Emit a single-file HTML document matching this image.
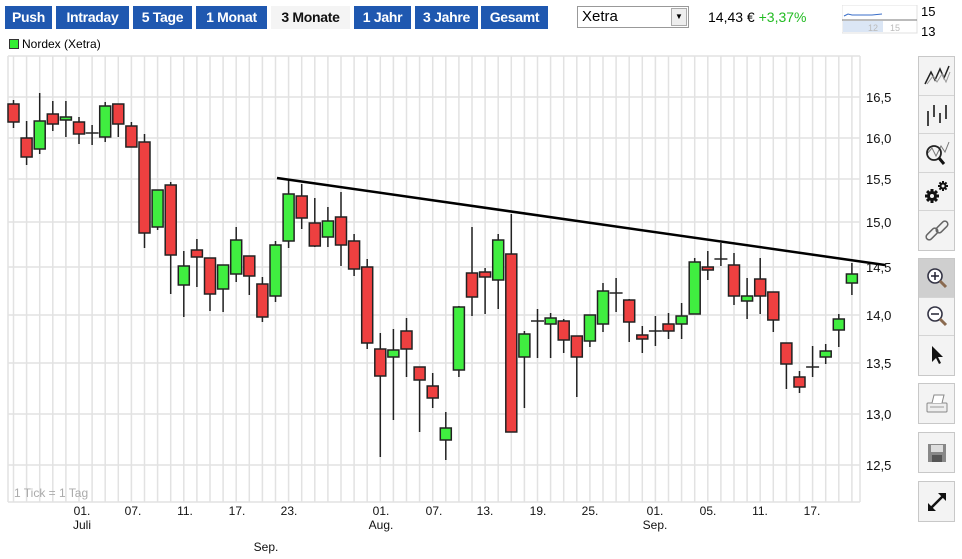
<!DOCTYPE html><html><head><meta charset="utf-8"><style>
body{margin:0;width:962px;height:559px;background:#fff;font-family:"Liberation Sans",sans-serif;position:relative;overflow:hidden}
.b{position:absolute;top:6px;height:23px;line-height:23px;background:#1f58b0;color:#fff;font-weight:bold;font-size:14px;text-align:center;font-family:"Liberation Sans Narrow","Liberation Sans",sans-serif;letter-spacing:-0.3px}
.sel{background:#f4f4f4;color:#111}
.tb{position:absolute;left:918px;width:37px;background:#f3f3f3;border:1px solid #c8c8c8;box-sizing:border-box}
.tb div{height:38.6px;border-bottom:1px solid #d4d4d4;box-sizing:border-box;display:flex;align-items:center;justify-content:center}
.tb div:last-child{border-bottom:none}
</style></head><body>
<div class="b" style="left:5px;width:47px">Push</div>
<div class="b" style="left:56px;width:73px">Intraday</div>
<div class="b" style="left:133px;width:59px">5 Tage</div>
<div class="b" style="left:196px;width:71px">1 Monat</div>
<div class="b sel" style="left:271px;width:79px">3 Monate</div>
<div class="b" style="left:354px;width:57px">1 Jahr</div>
<div class="b" style="left:415px;width:63px">3 Jahre</div>
<div class="b" style="left:481px;width:67px">Gesamt</div>
<div style="position:absolute;left:577px;top:6px;width:112px;height:22px;border:1px solid #999;box-sizing:border-box;font-size:15px;line-height:20px;padding-left:4px">Xetra<div style="position:absolute;right:1px;top:1px;width:16px;height:18px;background:#eee;border:1px solid #aaa;box-sizing:border-box;font-size:8px;text-align:center;line-height:16px">▼</div></div>
<div style="position:absolute;left:708px;top:9px;font-size:14px">14,43 € <span style="color:#22bb22">+3,37%</span></div>
<svg style="position:absolute;left:842px;top:5px" width="120" height="34">
<rect x="0" y="0" width="75" height="28" fill="#fff" stroke="#e0e0e0"/><rect x="1" y="16" width="40" height="11" fill="#dbe6f5"/>
<line x1="0" y1="15" x2="75" y2="15" stroke="#777"/><polyline points="2,11 6,9 10,10 20,10 30,10 40,9" fill="none" stroke="#3a6ec8"/>
<text x="26" y="26" font-size="9" fill="#bbb">12</text><text x="48" y="26" font-size="9" fill="#bbb">15</text>
<text x="79" y="11" font-size="13">15</text><text x="79" y="31" font-size="13">13</text></svg>
<div style="position:absolute;left:9px;top:39px;width:8px;height:8px;background:#3e3;border:1px solid #333"></div>
<div style="position:absolute;left:22px;top:37px;font-size:12px">Nordex (Xetra)</div>
<svg style="position:absolute;left:0;top:0" width="915" height="559">
<g stroke="#e2e2e2" stroke-width="1.5" id="v">
<line x1="8" y1="56" x2="8" y2="502"/><line x1="860" y1="56" x2="860" y2="502"/><line x1="8" y1="56" x2="860" y2="56"/><line x1="8" y1="502" x2="860" y2="502"/>
<line x1="13.5" y1="56" x2="13.5" y2="502"/><line x1="26.6" y1="56" x2="26.6" y2="502"/><line x1="39.7" y1="56" x2="39.7" y2="502"/><line x1="52.8" y1="56" x2="52.8" y2="502"/><line x1="65.9" y1="56" x2="65.9" y2="502"/><line x1="79" y1="56" x2="79" y2="502"/><line x1="92.1" y1="56" x2="92.1" y2="502"/><line x1="105.2" y1="56" x2="105.2" y2="502"/><line x1="118.3" y1="56" x2="118.3" y2="502"/><line x1="131.4" y1="56" x2="131.4" y2="502"/><line x1="144.5" y1="56" x2="144.5" y2="502"/><line x1="157.6" y1="56" x2="157.6" y2="502"/><line x1="170.7" y1="56" x2="170.7" y2="502"/><line x1="183.8" y1="56" x2="183.8" y2="502"/><line x1="196.9" y1="56" x2="196.9" y2="502"/><line x1="210" y1="56" x2="210" y2="502"/><line x1="223.1" y1="56" x2="223.1" y2="502"/><line x1="236.2" y1="56" x2="236.2" y2="502"/><line x1="249.3" y1="56" x2="249.3" y2="502"/><line x1="262.4" y1="56" x2="262.4" y2="502"/><line x1="275.5" y1="56" x2="275.5" y2="502"/><line x1="288.6" y1="56" x2="288.6" y2="502"/><line x1="301.7" y1="56" x2="301.7" y2="502"/><line x1="314.8" y1="56" x2="314.8" y2="502"/><line x1="327.9" y1="56" x2="327.9" y2="502"/><line x1="341" y1="56" x2="341" y2="502"/><line x1="354.1" y1="56" x2="354.1" y2="502"/><line x1="367.2" y1="56" x2="367.2" y2="502"/><line x1="380.3" y1="56" x2="380.3" y2="502"/><line x1="393.4" y1="56" x2="393.4" y2="502"/><line x1="406.5" y1="56" x2="406.5" y2="502"/><line x1="419.6" y1="56" x2="419.6" y2="502"/><line x1="432.7" y1="56" x2="432.7" y2="502"/><line x1="445.8" y1="56" x2="445.8" y2="502"/><line x1="458.9" y1="56" x2="458.9" y2="502"/><line x1="472" y1="56" x2="472" y2="502"/><line x1="485.1" y1="56" x2="485.1" y2="502"/><line x1="498.2" y1="56" x2="498.2" y2="502"/><line x1="511.3" y1="56" x2="511.3" y2="502"/><line x1="524.4" y1="56" x2="524.4" y2="502"/><line x1="537.5" y1="56" x2="537.5" y2="502"/><line x1="550.6" y1="56" x2="550.6" y2="502"/><line x1="563.7" y1="56" x2="563.7" y2="502"/><line x1="576.8" y1="56" x2="576.8" y2="502"/><line x1="589.9" y1="56" x2="589.9" y2="502"/><line x1="603" y1="56" x2="603" y2="502"/><line x1="616.1" y1="56" x2="616.1" y2="502"/><line x1="629.2" y1="56" x2="629.2" y2="502"/><line x1="642.3" y1="56" x2="642.3" y2="502"/><line x1="655.4" y1="56" x2="655.4" y2="502"/><line x1="668.5" y1="56" x2="668.5" y2="502"/><line x1="681.6" y1="56" x2="681.6" y2="502"/><line x1="694.7" y1="56" x2="694.7" y2="502"/><line x1="707.8" y1="56" x2="707.8" y2="502"/><line x1="720.9" y1="56" x2="720.9" y2="502"/><line x1="734" y1="56" x2="734" y2="502"/><line x1="747.1" y1="56" x2="747.1" y2="502"/><line x1="760.2" y1="56" x2="760.2" y2="502"/><line x1="773.3" y1="56" x2="773.3" y2="502"/><line x1="786.4" y1="56" x2="786.4" y2="502"/><line x1="799.5" y1="56" x2="799.5" y2="502"/><line x1="812.6" y1="56" x2="812.6" y2="502"/><line x1="825.7" y1="56" x2="825.7" y2="502"/><line x1="838.8" y1="56" x2="838.8" y2="502"/><line x1="851.9" y1="56" x2="851.9" y2="502"/>
<line x1="8" y1="97" x2="860" y2="97"/><line x1="8" y1="138" x2="860" y2="138"/><line x1="8" y1="179" x2="860" y2="179"/><line x1="8" y1="222" x2="860" y2="222"/><line x1="8" y1="267" x2="860" y2="267"/><line x1="8" y1="315" x2="860" y2="315"/><line x1="8" y1="363" x2="860" y2="363"/><line x1="8" y1="414" x2="860" y2="414"/><line x1="8" y1="465" x2="860" y2="465"/>
</g>
<g font-size="13" fill="#111"><text x="866" y="102">16,5</text><text x="866" y="143">16,0</text><text x="866" y="184">15,5</text><text x="866" y="227">15,0</text><text x="866" y="272">14,5</text><text x="866" y="320">14,0</text><text x="866" y="368">13,5</text><text x="866" y="419">13,0</text><text x="866" y="470">12,5</text></g>
<text x="14" y="497" font-size="12" fill="#aaa">1 Tick = 1 Tag</text>
<g font-size="12" fill="#111" text-anchor="middle"><text x="82" y="515">01.</text><text x="82" y="529">Juli</text><text x="133" y="515">07.</text><text x="185" y="515">11.</text><text x="237" y="515">17.</text><text x="289" y="515">23.</text><text x="381" y="515">01.</text><text x="381" y="529">Aug.</text><text x="434" y="515">07.</text><text x="485" y="515">13.</text><text x="538" y="515">19.</text><text x="590" y="515">25.</text><text x="655" y="515">01.</text><text x="655" y="529">Sep.</text><text x="708" y="515">05.</text><text x="760" y="515">11.</text><text x="812" y="515">17.</text><text x="266" y="551">Sep.</text></g>
<g stroke="#222" stroke-width="1.5">
<line x1="13.5" y1="100" x2="13.5" y2="128"/><rect x="8" y="104" width="11" height="18" fill="#ee4040"/>
<line x1="26.6" y1="121" x2="26.6" y2="165"/><rect x="21.1" y="138" width="11" height="19" fill="#ee4040"/>
<line x1="39.7" y1="93" x2="39.7" y2="154"/><rect x="34.2" y="121" width="11" height="28" fill="#40ee40"/>
<line x1="52.8" y1="101" x2="52.8" y2="131"/><rect x="47.3" y="114" width="11" height="10" fill="#ee4040"/>
<line x1="65.9" y1="101" x2="65.9" y2="137"/><rect x="60.4" y="117" width="11" height="3" fill="#40ee40"/>
<line x1="79" y1="117" x2="79" y2="144"/><rect x="73.5" y="122" width="11" height="12" fill="#ee4040"/>
<line x1="92.1" y1="125" x2="92.1" y2="145"/><line x1="85.6" y1="133" x2="98.6" y2="133"/>
<line x1="105.2" y1="102" x2="105.2" y2="142"/><rect x="99.7" y="106" width="11" height="31" fill="#40ee40"/>
<line x1="118.3" y1="104" x2="118.3" y2="137"/><rect x="112.8" y="104" width="11" height="20" fill="#ee4040"/>
<line x1="131.4" y1="122" x2="131.4" y2="147"/><rect x="125.9" y="126" width="11" height="21" fill="#ee4040"/>
<line x1="144.5" y1="134" x2="144.5" y2="248"/><rect x="139" y="142" width="11" height="91" fill="#ee4040"/>
<line x1="157.6" y1="190" x2="157.6" y2="230"/><rect x="152.1" y="190" width="11" height="37" fill="#40ee40"/>
<line x1="170.7" y1="182" x2="170.7" y2="294"/><rect x="165.2" y="185" width="11" height="70" fill="#ee4040"/>
<line x1="183.8" y1="251" x2="183.8" y2="317"/><rect x="178.3" y="266" width="11" height="19" fill="#40ee40"/>
<line x1="196.9" y1="239" x2="196.9" y2="287"/><rect x="191.4" y="250" width="11" height="7" fill="#ee4040"/>
<line x1="210" y1="258" x2="210" y2="311"/><rect x="204.5" y="258" width="11" height="36" fill="#ee4040"/>
<line x1="223.1" y1="265" x2="223.1" y2="312"/><rect x="217.6" y="265" width="11" height="24" fill="#40ee40"/>
<line x1="236.2" y1="227" x2="236.2" y2="282"/><rect x="230.7" y="240" width="11" height="34" fill="#40ee40"/>
<line x1="249.3" y1="256" x2="249.3" y2="295"/><rect x="243.8" y="256" width="11" height="20" fill="#ee4040"/>
<line x1="262.4" y1="277" x2="262.4" y2="322"/><rect x="256.9" y="284" width="11" height="33" fill="#ee4040"/>
<line x1="275.5" y1="241" x2="275.5" y2="302"/><rect x="270" y="245" width="11" height="51" fill="#40ee40"/>
<line x1="288.6" y1="179" x2="288.6" y2="248"/><rect x="283.1" y="194" width="11" height="47" fill="#40ee40"/>
<line x1="301.7" y1="184" x2="301.7" y2="229"/><rect x="296.2" y="196" width="11" height="22" fill="#ee4040"/>
<line x1="314.8" y1="198" x2="314.8" y2="247"/><rect x="309.3" y="223" width="11" height="23" fill="#ee4040"/>
<line x1="327.9" y1="207" x2="327.9" y2="247"/><rect x="322.4" y="221" width="11" height="16" fill="#40ee40"/>
<line x1="341" y1="192" x2="341" y2="266"/><rect x="335.5" y="217" width="11" height="28" fill="#ee4040"/>
<line x1="354.1" y1="234" x2="354.1" y2="276"/><rect x="348.6" y="241" width="11" height="28" fill="#ee4040"/>
<line x1="367.2" y1="259" x2="367.2" y2="349"/><rect x="361.7" y="267" width="11" height="76" fill="#ee4040"/>
<line x1="380.3" y1="333" x2="380.3" y2="457"/><rect x="374.8" y="349" width="11" height="27" fill="#ee4040"/>
<line x1="393.4" y1="329" x2="393.4" y2="420"/><rect x="387.9" y="350" width="11" height="7" fill="#40ee40"/>
<line x1="406.5" y1="318" x2="406.5" y2="377"/><rect x="401" y="331" width="11" height="18" fill="#ee4040"/>
<line x1="419.6" y1="367" x2="419.6" y2="432"/><rect x="414.1" y="367" width="11" height="13" fill="#ee4040"/>
<line x1="432.7" y1="373" x2="432.7" y2="408"/><rect x="427.2" y="386" width="11" height="12" fill="#ee4040"/>
<line x1="445.8" y1="412" x2="445.8" y2="460"/><rect x="440.3" y="428" width="11" height="12" fill="#40ee40"/>
<line x1="458.9" y1="306" x2="458.9" y2="377"/><rect x="453.4" y="307" width="11" height="63" fill="#40ee40"/>
<line x1="472" y1="227" x2="472" y2="316"/><rect x="466.5" y="273" width="11" height="24" fill="#ee4040"/>
<line x1="485.1" y1="268" x2="485.1" y2="314"/><rect x="479.6" y="272" width="11" height="5" fill="#ee4040"/>
<line x1="498.2" y1="234" x2="498.2" y2="309"/><rect x="492.7" y="240" width="11" height="40" fill="#40ee40"/>
<line x1="511.3" y1="214" x2="511.3" y2="432"/><rect x="505.8" y="254" width="11" height="178" fill="#ee4040"/>
<line x1="524.4" y1="331" x2="524.4" y2="408"/><rect x="518.9" y="334" width="11" height="23" fill="#40ee40"/>
<line x1="537.5" y1="309" x2="537.5" y2="358"/><line x1="531" y1="321" x2="544" y2="321"/>
<line x1="550.6" y1="313" x2="550.6" y2="358"/><rect x="545.1" y="318" width="11" height="6" fill="#40ee40"/>
<line x1="563.7" y1="319" x2="563.7" y2="353"/><rect x="558.2" y="321" width="11" height="19" fill="#ee4040"/>
<line x1="576.8" y1="336" x2="576.8" y2="397"/><rect x="571.3" y="336" width="11" height="21" fill="#ee4040"/>
<line x1="589.9" y1="315" x2="589.9" y2="347"/><rect x="584.4" y="315" width="11" height="26" fill="#40ee40"/>
<line x1="603" y1="283" x2="603" y2="332"/><rect x="597.5" y="291" width="11" height="33" fill="#40ee40"/>
<line x1="616.1" y1="278" x2="616.1" y2="312"/><line x1="609.6" y1="293" x2="622.6" y2="293"/>
<line x1="629.2" y1="299" x2="629.2" y2="342"/><rect x="623.7" y="300" width="11" height="22" fill="#ee4040"/>
<line x1="642.3" y1="326" x2="642.3" y2="353"/><rect x="636.8" y="335" width="11" height="4" fill="#ee4040"/>
<line x1="655.4" y1="316" x2="655.4" y2="346"/><line x1="648.9" y1="331" x2="661.9" y2="331"/>
<line x1="668.5" y1="313" x2="668.5" y2="339"/><rect x="663" y="324" width="11" height="7" fill="#ee4040"/>
<line x1="681.6" y1="303" x2="681.6" y2="339"/><rect x="676.1" y="316" width="11" height="8" fill="#40ee40"/>
<line x1="694.7" y1="258" x2="694.7" y2="314"/><rect x="689.2" y="262" width="11" height="52" fill="#40ee40"/>
<line x1="707.8" y1="251" x2="707.8" y2="280"/><rect x="702.3" y="267" width="11" height="3" fill="#ee4040"/>
<line x1="720.9" y1="243" x2="720.9" y2="266"/><line x1="714.4" y1="259" x2="727.4" y2="259"/>
<line x1="734" y1="253" x2="734" y2="305"/><rect x="728.5" y="265" width="11" height="31" fill="#ee4040"/>
<line x1="747.1" y1="278" x2="747.1" y2="319"/><rect x="741.6" y="296" width="11" height="5" fill="#40ee40"/>
<line x1="760.2" y1="258" x2="760.2" y2="314"/><rect x="754.7" y="279" width="11" height="17" fill="#ee4040"/>
<line x1="773.3" y1="292" x2="773.3" y2="332"/><rect x="767.8" y="292" width="11" height="28" fill="#ee4040"/>
<line x1="786.4" y1="343" x2="786.4" y2="389"/><rect x="780.9" y="343" width="11" height="21" fill="#ee4040"/>
<line x1="799.5" y1="371" x2="799.5" y2="393"/><rect x="794" y="377" width="11" height="10" fill="#ee4040"/>
<line x1="812.6" y1="346" x2="812.6" y2="377"/><line x1="806.1" y1="367" x2="819.1" y2="367"/>
<line x1="825.7" y1="344" x2="825.7" y2="364"/><rect x="820.2" y="351" width="11" height="6" fill="#40ee40"/>
<line x1="838.8" y1="314" x2="838.8" y2="347"/><rect x="833.3" y="319" width="11" height="11" fill="#40ee40"/>
<line x1="851.9" y1="263" x2="851.9" y2="295"/><rect x="846.4" y="274" width="11" height="9" fill="#40ee40"/>
</g>
<line x1="277" y1="178" x2="885" y2="265" stroke="#000" stroke-width="2.5"/>
</svg>
<div class="tb" style="top:56px;height:195px">
<div><svg width="28" height="24"><polyline points="2,20 8,8 12,16 17,5 21,14 26,2" fill="none" stroke="#222" stroke-width="1.5"/><polyline points="4,20 10,12 14,18 19,10 23,18 27,8" fill="none" stroke="#999" stroke-width="1"/></svg></div>
<div><svg width="28" height="26"><g stroke="#444" stroke-width="2"><line x1="5" y1="10" x2="5" y2="25"/><line x1="11" y1="4" x2="11" y2="16"/><line x1="17" y1="12" x2="17" y2="22"/><line x1="23" y1="4" x2="23" y2="18"/></g></svg></div>
<div><svg width="28" height="26"><polyline points="4,14 9,8 13,16 18,6 22,12 26,2" fill="none" stroke="#777" stroke-width="1"/><circle cx="11" cy="13" r="7" fill="none" stroke="#222" stroke-width="1.8"/><line x1="16" y1="18" x2="21" y2="24" stroke="#111" stroke-width="3"/></svg></div>
<div><svg width="28" height="26"><g fill="#111"><circle cx="9" cy="17" r="5"/><rect x="7.5" y="10" width="3" height="14"/><rect x="2" y="15.5" width="14" height="3"/><rect x="7.5" y="10" width="3" height="14" transform="rotate(45 9 17)"/><rect x="7.5" y="10" width="3" height="14" transform="rotate(-45 9 17)"/><circle cx="20" cy="7" r="3.5"/><rect x="19" y="2" width="2" height="10"/><rect x="15" y="6" width="10" height="2"/><rect x="19" y="2" width="2" height="10" transform="rotate(45 20 7)"/><rect x="19" y="2" width="2" height="10" transform="rotate(-45 20 7)"/></g><circle cx="9" cy="17" r="2" fill="#f3f3f3"/><circle cx="20" cy="7" r="1.5" fill="#f3f3f3"/></svg></div>
<div><svg width="28" height="26"><g fill="none" stroke="#666" stroke-width="1.5"><rect x="2" y="13" width="14" height="6" rx="3" transform="rotate(-45 9 16)"/><rect x="12" y="6" width="14" height="6" rx="3" transform="rotate(-45 19 9)"/></g></svg></div>
</div>
<div class="tb" style="top:258px;height:118px">
<div style="background:#cfcfcf"><svg width="26" height="26"><circle cx="11" cy="11" r="7" fill="#fff" stroke="#334" stroke-width="1.6"/><path d="M7 11h8M11 7v8" stroke="#223" stroke-width="1.5"/><line x1="16" y1="16" x2="22" y2="22" stroke="#8a6a50" stroke-width="3"/></svg></div>
<div><svg width="26" height="26"><circle cx="11" cy="11" r="7" fill="#fff" stroke="#334" stroke-width="1.6"/><path d="M7 11h8" stroke="#223" stroke-width="1.5"/><line x1="16" y1="16" x2="22" y2="22" stroke="#8a6a50" stroke-width="3"/></svg></div>
<div><svg width="26" height="26"><path d="M8 4 L8 20 L12 16 L15 22 L17 21 L14 15 L19 15 Z" fill="#111"/></svg></div>
</div>
<div class="tb" style="top:383px;height:41px"><div style="height:39px"><svg width="26" height="26"><rect x="3" y="12" width="20" height="9" rx="1" fill="#eee" stroke="#888"/><path d="M8 12 L10 4 L20 4 L18 12" fill="#fff" stroke="#888"/><line x1="6" y1="16" x2="20" y2="16" stroke="#999"/></svg></div></div>
<div class="tb" style="top:432px;height:41px"><div style="height:39px"><svg width="26" height="26"><rect x="4" y="4" width="18" height="18" fill="#888"/><rect x="7" y="5" width="12" height="7" fill="#ddd"/><rect x="8" y="15" width="10" height="7" fill="#555"/></svg></div></div>
<div class="tb" style="top:481px;height:41px"><div style="height:39px"><svg width="26" height="26"><line x1="6" y1="20" x2="20" y2="6" stroke="#111" stroke-width="2.5"/><path d="M4 22 L4 14 L12 22 Z M22 4 L14 4 L22 12 Z" fill="#111"/></svg></div></div>
</body></html>
